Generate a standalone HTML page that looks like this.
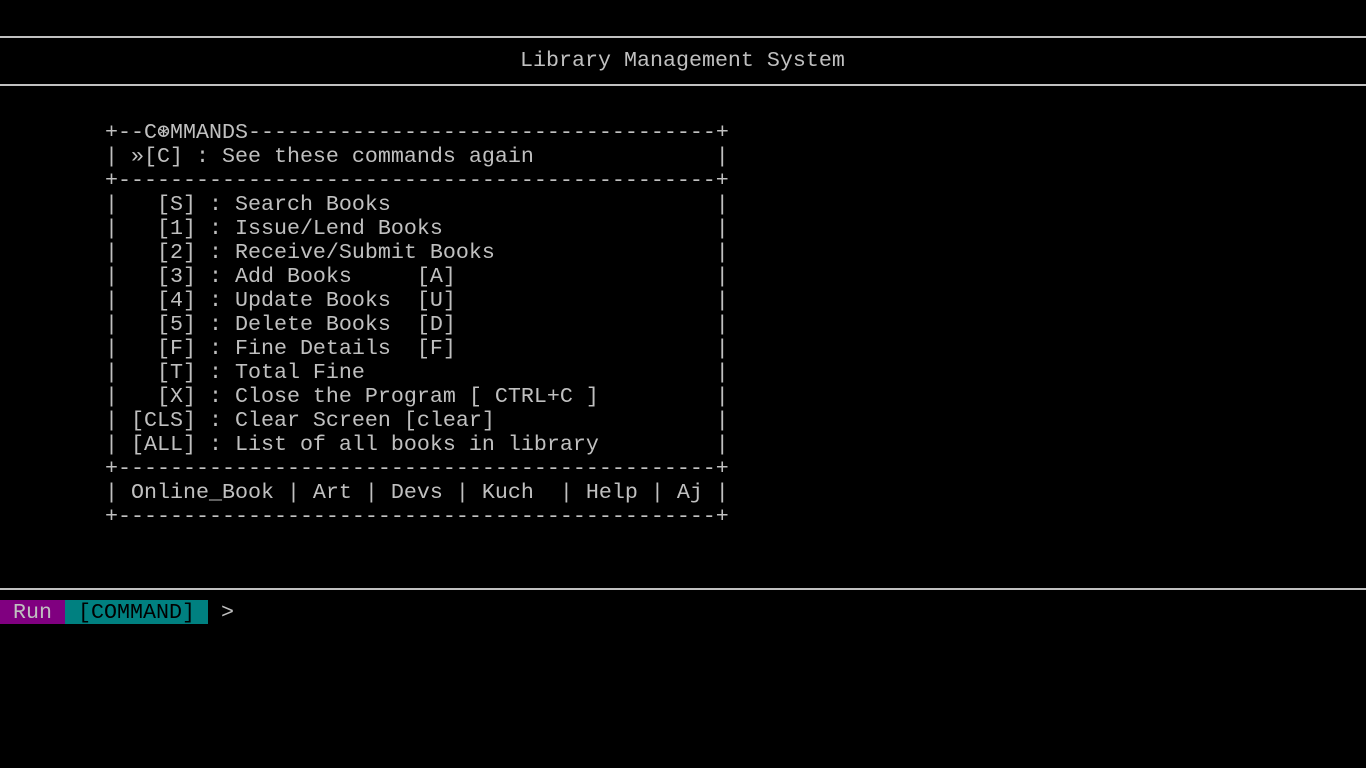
<!DOCTYPE html>
<html><head><meta charset="utf-8"><style>
html,body{margin:0;padding:0;background:#000;width:1366px;height:768px;overflow:hidden}
body{position:relative;font-family:"Liberation Mono","DejaVu Sans Mono",monospace;font-size:21.67px;color:#c0c0c0}
.hr{position:absolute;left:0;width:1366px;height:2px;background:#c0c0c0}
pre{margin:0;font:inherit;line-height:24px;position:absolute;white-space:pre}
.bar{position:absolute;top:600px;height:24px;line-height:25px;white-space:pre}
</style></head><body>
<div class="hr" style="top:36px"></div>
<div class="hr" style="top:84px"></div>
<pre style="left:520px;top:49px">Library Management System</pre>
<pre style="left:105px;top:121px">+--C⊛MMANDS------------------------------------+
| »[C] : See these commands again              |
+----------------------------------------------+
|   [S] : Search Books                         |
|   [1] : Issue/Lend Books                     |
|   [2] : Receive/Submit Books                 |
|   [3] : Add Books     [A]                    |
|   [4] : Update Books  [U]                    |
|   [5] : Delete Books  [D]                    |
|   [F] : Fine Details  [F]                    |
|   [T] : Total Fine                           |
|   [X] : Close the Program [ CTRL+C ]         |
| [CLS] : Clear Screen [clear]                 |
| [ALL] : List of all books in library         |
+----------------------------------------------+
| Online_Book | Art | Devs | Kuch  | Help | Aj |
+----------------------------------------------+</pre>
<div class="hr" style="top:588px"></div>
<div class="bar" style="left:0;width:65px;background:#800080;color:#c0c0c0"> Run</div>
<div class="bar" style="left:65px;width:143px;background:#008080;color:#000"> [COMMAND]</div>
<div class="bar" style="left:221px">&gt;</div>
</body></html>
